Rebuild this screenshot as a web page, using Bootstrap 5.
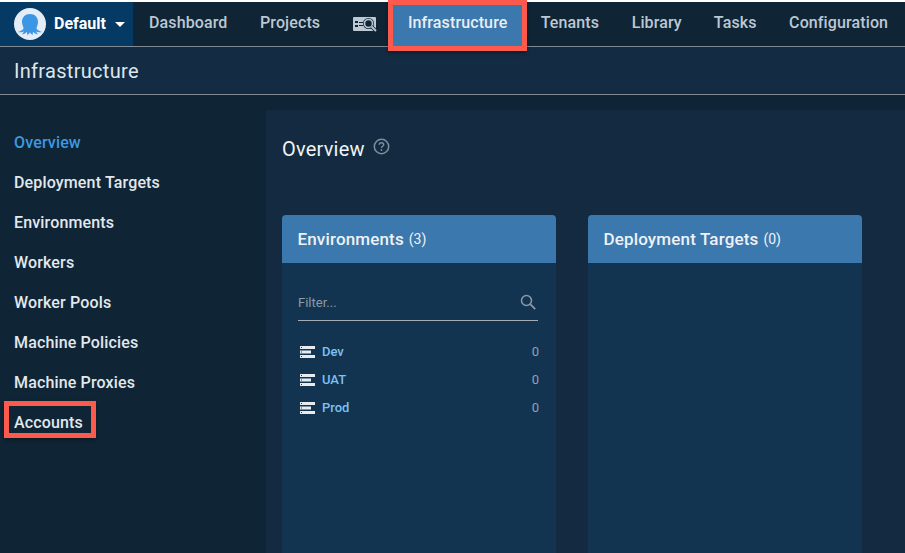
<!DOCTYPE html>
<html lang="en">
<head>
  <meta charset="UTF-8">
  <title>Infrastructure</title>
  <link href="https://cdn.jsdelivr.net/npm/bootstrap@5.3.2/dist/css/bootstrap.min.css" rel="stylesheet">
  <style>
    html, body { height: 100%; overflow: hidden; }
    body { background: #0f2535; font-family: Roboto, "Liberation Sans", sans-serif; color: #e8edf2; padding-top: 2px; box-shadow: inset 0 2px 0 #fff; }
    .top-bar { height: 45px; border-bottom: 1px solid #7f8a94; background: #0f2535; }
    .space-switch { width: 133px; height: 44px; background: #053a64; padding-left: 14px; color: #fff; font-weight: 700; font-size: 16px; gap: 8px; }
    .caret-down { width: 0; height: 0; margin-left: 1px; border-left: 5px solid transparent; border-right: 5px solid transparent; border-top: 5px solid #fff; }
    .top-link { color: #bcc8d4; font-size: 16px; font-weight: 500; letter-spacing: .12px; text-decoration: none; height: 42px; display: flex; align-items: center; }
    .top-link:hover { color: #fff; }
    .link-dash { margin-left: 16px; }
    .link-proj { margin-left: 32.500px; }
    .link-search { margin-left: 33px; height: 44px; }
    .link-infra { margin-left: 16px; width: 129px; justify-content: center; background: #3b78ad; color: #e8eef4; height: 41px; margin-top: 3px; padding-bottom: 5px; box-shadow: 0 0 0 5px #fb5a4c, 0 2px 4px 5px rgba(0,0,0,.35); position: relative; z-index: 2; }
    .link-ten { margin-left: 18.500px; }
    .link-lib { margin-left: 32.500px; }
    .link-task { margin-left: 32px; }
    .link-conf { margin-left: 32.500px; }
    .sub-head { height: 48px; background: #132c43; border-bottom: 1px solid #7f8a94; padding-left: 14px; font-size: 20px; letter-spacing: .3px; color: #dfe6ec; display: flex; align-items: center; }
    .page-body { height: 458px; }
    .side-menu { width: 266px; flex: none; padding-top: 28px; }
    .side-item { display: block; width: fit-content; margin-left: 14px; height: 40px; line-height: 40px; color: #e2e8ee; font-size: 16px; font-weight: 500; letter-spacing: .15px; text-decoration: none; }
    .side-item.on { color: #3d99e0; }
    .side-item.marked { height: 27px; line-height: 34px; margin: 3px 0 0 9px; padding: 0 7px 0 5px; width: 82px; box-shadow: 0 0 0 5px #fb5a4c, 0 2px 4px 5px rgba(0,0,0,.35); }
    .main-pane { margin-top: 15px; background: #132a40; flex: 1; padding: 0 16px; overflow: hidden; }
    .pane-title { height: 105px; padding-top: 24px; font-size: 20px; letter-spacing: .2px; color: #f0f3f6; gap: 8px; }
    .board { gap: 32px; }
    .env-card { width: 274px; height: 338px; background: #133450; border-radius: 4px 4px 0 0; }
    .env-head { height: 48px; background: #3b78ad; border-radius: 4px 4px 0 0; padding: 1px 0 0 15.500px; font-size: 17px; font-weight: 500; letter-spacing: .15px; color: #eef2f6; display: flex; align-items: center; gap: 5px; }
    .env-head small { font-size: 14px; font-weight: 400; letter-spacing: 0; }
    .filter-box { margin: 26px 18px 0 16px; height: 32px; border-bottom: 1px solid #a3adb6; display: flex; justify-content: space-between; align-items: flex-start; padding-right: 2px; color: #8c9aa8; font-size: 13px; line-height: 27px; }
    .filter-icon { margin-top: 5px; }
    .env-list { margin: 17px 17px 0 18px; }
    .env-row { height: 28px; font-size: 13px; }
    .env-row a { color: #7cc0f5; font-weight: 500; text-decoration: none; margin-left: 7px; }
    .env-row .cnt { margin-left: auto; color: #93a1ae; }
  </style>
</head>
<body>
  <nav class="top-bar d-flex align-items-start">
    <div class="space-switch d-flex align-items-center">
      <svg width="32" height="32" viewBox="0 0 32 32">
        <circle cx="16" cy="16" r="16" fill="#e4edf5"/>
        <path d="M16 6c-5 0-8 3.500-8 8 0 3 1.500 4.500 1.500 6.500 0 1-2.500 2.500-5.500 3.500 2 .500 4.500.200 6-.800-.300 1.200-1 2-2 3 2 .300 3.500-.800 5-2.500.300 1 .300 1.800 0 3 1.500 0 2.300-1 3-2.500.700 1.500 1.500 2.500 3 2.500-.300-1.200-.300-2 0-3 1.500 1.700 3 2.800 5 2.500-1-1-1.700-1.800-2-3 1.500 1 4 1.300 6 .800-3-1-5.500-2.500-5.500-3.500 0-2 1.500-3.500 1.500-6.500 0-4.500-3-8-8-8z" fill="#3b97e3"/>
      </svg>
      <span>Default</span>
      <span class="caret-down"></span>
    </div>
    <a class="top-link link-dash" href="#">Dashboard</a>
    <a class="top-link link-proj" href="#">Projects</a>
    <a class="top-link link-search" href="#">
      <svg width="24" height="16" viewBox="0 0 24 16">
        <rect x="0" y="1" width="23" height="14" rx="1" fill="#bcc8d4"/>
        <path d="M2 5h3v2H2zM2 9h3v2H2zM6 6h4v1H6zM6 9h4v1H6z" fill="#0f2535"/>
        <circle cx="15.500" cy="7.500" r="5.500" fill="#0f2535"/>
        <circle cx="15.500" cy="7.500" r="4" fill="none" stroke="#bcc8d4" stroke-width="1.600"/>
        <path d="M18.500 10.500l4 4" stroke="#0f2535" stroke-width="3.500"/>
        <path d="M18.500 10.500l4.500 4.500" stroke="#bcc8d4" stroke-width="1.800"/>
      </svg>
    </a>
    <a class="top-link link-infra" href="#">Infrastructure</a>
    <a class="top-link link-ten" href="#">Tenants</a>
    <a class="top-link link-lib" href="#">Library</a>
    <a class="top-link link-task" href="#">Tasks</a>
    <a class="top-link link-conf" href="#">Configuration</a>
  </nav>
  <div class="sub-head">Infrastructure</div>
  <div class="page-body d-flex">
    <div class="side-menu">
      <a class="side-item on" href="#">Overview</a>
      <a class="side-item" href="#">Deployment Targets</a>
      <a class="side-item" href="#">Environments</a>
      <a class="side-item" href="#">Workers</a>
      <a class="side-item" href="#">Worker Pools</a>
      <a class="side-item" href="#">Machine Policies</a>
      <a class="side-item" href="#">Machine Proxies</a>
      <a class="side-item marked" href="#">Accounts</a>
    </div>
    <div class="main-pane">
      <div class="pane-title d-flex align-items-start">
        <span>Overview</span>
        <svg class="mt-1" width="17" height="17" viewBox="0 0 17 17">
          <circle cx="8.500" cy="8.500" r="7.200" fill="none" stroke="#7f8f9e" stroke-width="1.500"/>
          <path d="M6.300 6.800c0-1.300 1-2.100 2.200-2.100s2.200.8 2.200 2c0 1.600-2.200 1.600-2.200 3.300" fill="none" stroke="#7f8f9e" stroke-width="1.400"/>
          <circle cx="8.500" cy="12" r=".9" fill="#7f8f9e"/>
        </svg>
      </div>
      <div class="board d-flex">
        <div class="env-card">
          <div class="env-head">Environments <small>(3)</small></div>
          <div class="filter-box">
            <span>Filter...</span>
            <svg width="16" height="16" viewBox="0 0 16 16" class="filter-icon">
              <circle cx="6.500" cy="6.500" r="5" fill="none" stroke="#8c9aa8" stroke-width="1.500"/>
              <path d="M10.200 10.200l5 5" stroke="#8c9aa8" stroke-width="1.700"/>
            </svg>
          </div>
          <div class="env-list">
            <div class="env-row d-flex align-items-center"><svg width="15" height="12" viewBox="0 0 15 12"><path d="M0 0h15v3H0zM0 4.500h11v3H0zM0 9h15v3H0z" fill="#e6ebf0"/><path d="M1 1h1v1H1zM1 5.500h1v1H1zM1 10h1v1H1z" fill="#133450"/></svg><a href="#">Dev</a><span class="cnt">0</span></div>
            <div class="env-row d-flex align-items-center"><svg width="15" height="12" viewBox="0 0 15 12"><path d="M0 0h15v3H0zM0 4.500h11v3H0zM0 9h15v3H0z" fill="#e6ebf0"/><path d="M1 1h1v1H1zM1 5.500h1v1H1zM1 10h1v1H1z" fill="#133450"/></svg><a href="#">UAT</a><span class="cnt">0</span></div>
            <div class="env-row d-flex align-items-center"><svg width="15" height="12" viewBox="0 0 15 12"><path d="M0 0h15v3H0zM0 4.500h11v3H0zM0 9h15v3H0z" fill="#e6ebf0"/><path d="M1 1h1v1H1zM1 5.500h1v1H1zM1 10h1v1H1z" fill="#133450"/></svg><a href="#">Prod</a><span class="cnt">0</span></div>
          </div>
        </div>
        <div class="env-card">
          <div class="env-head">Deployment Targets <small>(0)</small></div>
        </div>
      </div>
    </div>
  </div>
  <script src="https://cdn.jsdelivr.net/npm/bootstrap@5.3.2/dist/js/bootstrap.bundle.min.js"></script>
</body>
</html>
